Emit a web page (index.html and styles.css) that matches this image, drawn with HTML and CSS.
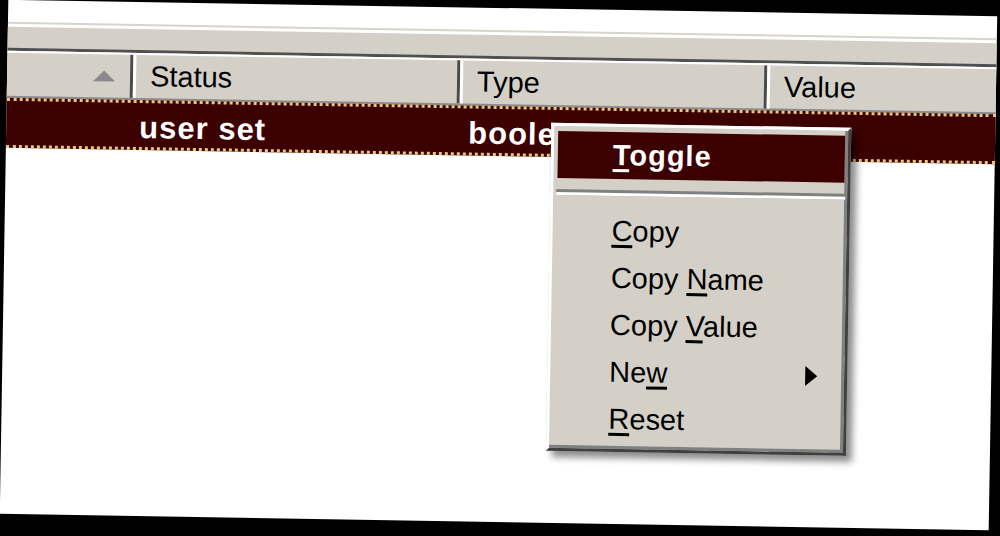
FILE: index.html
```html
<!DOCTYPE html>
<html lang="en">
<head>
  <meta charset="UTF-8" />
  <title>about:config</title>
  <link rel="stylesheet" href="styles.css">
</head>
<body>
  <div class="shot">
    <div class="top-gap"></div>
    <div class="filter-bar"></div>

    <div class="list-header">
      <div class="col col-name"><span class="sort-arrow"></span></div>
      <div class="col col-status">Status</div>
      <div class="col col-type">Type</div>
      <div class="col col-value">Value</div>
    </div>

    <div class="list-row selected">
      <div class="cell col-name"></div>
      <div class="cell col-status">user set</div>
      <div class="cell col-type">boolean</div>
      <div class="cell col-value"></div>
    </div>

    <div class="context-menu">
      <div class="menu-item default active"><span><u>T</u>oggle</span></div>
      <div class="menu-sep"></div>
      <div class="menu-item"><span><u>C</u>opy</span></div>
      <div class="menu-item"><span>Copy <u>N</u>ame</span></div>
      <div class="menu-item"><span>Copy <u>V</u>alue</span></div>
      <div class="menu-item has-sub"><span>Ne<u>w</u></span><span class="sub-arrow"></span></div>
      <div class="menu-item"><span><u>R</u>eset</span></div>
    </div>
  </div>
</body>
</html>
```

FILE: styles.css
```css
* {
  margin: 0;
  padding: 0;
  box-sizing: border-box;
}

body {
  background: #000;
  width: 1000px;
  height: 536px;
  overflow: hidden;
  font-family: 'Liberation Sans', Arial, sans-serif;
}

.shot {
  position: relative;
  margin: 8px 0 0 4px;
  width: 989px;
  height: 514px;
  background: #fff;
  transform: rotate(0.95deg);
}

.top-gap {
  height: 24px;
  border-bottom: 2px solid #d8d4cc;
}

.filter-bar {
  margin-top: 3px;
  height: 24px;
  background: #d4d0c8;
  border-bottom: 3px solid #505050;
}

/* column header */
.list-header {
  display: flex;
  height: 47px;
  background: #d4d0c8;
  border-top: 2px solid #fff;
  border-bottom: 2px solid #8c8c8c;
}

.col {
  display: flex;
  align-items: center;
  padding-left: 14px;
  font-size: 29px;
  color: #000;
  border-left: 3px solid #fff;
  border-right: 3px solid #4a4a4a;
}

.col-name {
  width: 126px;
}

.col-status {
  width: 327px;
}

.col-type {
  width: 307px;
}

.col-value {
  flex: 1;
}

.list-header .col-name {
  justify-content: flex-end;
  padding-right: 15px;
  border-left: none;
}

.list-header .col-value {
  border-right: none;
}

.sort-arrow {
  width: 0;
  height: 0;
  border-left: 11px solid transparent;
  border-right: 11px solid transparent;
  border-bottom: 11px solid #8a8a8a;
}

/* selected row */
.list-row {
  display: flex;
  height: 50px;
}

.list-row.selected {
  background: #3c0000;
  border-top: 3px dotted #e8c878;
  border-bottom: 3px dotted #e8c878;
}

.cell {
  display: flex;
  align-items: center;
  padding: 5px 0 0 7px;
  font-size: 31px;
  font-weight: bold;
  letter-spacing: 1px;
  color: #fff;
}

.list-row .col-type {
  padding-left: 9px;
}

/* popup menu */
.context-menu {
  position: absolute;
  left: 545px;
  top: 114px;
  width: 300px;
  height: 328px;
  padding: 5px 3px 6px 4px;
  background: #d4d0c8;
  border-top: 3px solid #fff;
  border-left: 3px solid #fff;
  border-right: 3px solid #404040;
  border-bottom: 3px solid #404040;
  box-shadow: inset -3px -3px 0 #808080, 6px 6px 7px rgba(0, 0, 0, 0.45);
}

.menu-item {
  display: flex;
  align-items: center;
  height: 47px;
  padding-left: 55px;
  padding-right: 24px;
  font-size: 29px;
  color: #000;
}

.menu-item u {
  text-decoration-thickness: 3px;
  text-underline-offset: 4px;
}

.menu-item.default {
  font-weight: bold;
  letter-spacing: 1px;
}

.menu-item.active {
  background: #3c0000;
  color: #fff;
}

.menu-sep {
  height: 29px;
  margin: 0 -1px;
  padding-top: 11px;
}

.menu-sep::before {
  content: "";
  display: block;
  height: 3px;
  background: #808080;
  border-bottom: 3px solid #fff;
  box-sizing: content-box;
}

.sub-arrow {
  margin-left: auto;
  width: 0;
  height: 0;
  border-top: 10px solid transparent;
  border-bottom: 10px solid transparent;
  border-left: 12px solid #000;
}
```
